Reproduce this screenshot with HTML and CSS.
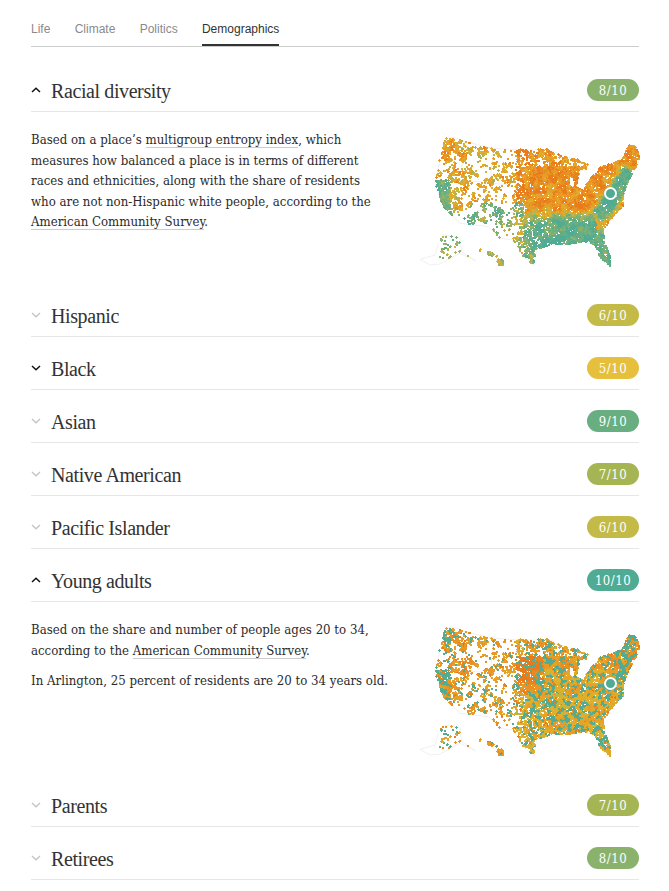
FILE: index.html
```html
<!DOCTYPE html>
<html lang="en">
<head>
<meta charset="utf-8">
<title>Demographics</title>
<link rel="stylesheet" href="styles.css">
</head>
<body>
<main class="page">
  <nav class="tabs">
    <a class="tab">Life</a>
    <a class="tab">Climate</a>
    <a class="tab">Politics</a>
    <a class="tab active">Demographics</a>
  </nav>

  <section class="item">
    <header class="row">
      <svg class="chev dark" viewBox="0 0 10 6"><path d="M1 5 5 1.2 9 5"/></svg>
      <h2>Racial diversity</h2>
      <span class="pill s8">8/10</span>
    </header>
    <div class="body">
      <div class="copy">
        <p>Based on a place’s <a>multigroup entropy index</a>, which<br>measures how balanced a place is in terms of different<br>races and ethnicities, along with the share of residents<br>who are not non-Hispanic white people, according to the<br><a>American Community Survey</a>.</p>
      </div>
      <div class="map"><canvas data-kind="racial" width="220" height="132"></canvas><i class="marker"></i></div>
    </div>
  </section>

  <section class="item">
    <header class="row">
      <svg class="chev" viewBox="0 0 10 6"><path d="M1 1 5 4.8 9 1"/></svg>
      <h2>Hispanic</h2>
      <span class="pill s6">6/10</span>
    </header>
  </section>
  <section class="item">
    <header class="row">
      <svg class="chev dark" viewBox="0 0 10 6"><path d="M1 1 5 4.8 9 1"/></svg>
      <h2>Black</h2>
      <span class="pill s5">5/10</span>
    </header>
  </section>
  <section class="item">
    <header class="row">
      <svg class="chev" viewBox="0 0 10 6"><path d="M1 1 5 4.8 9 1"/></svg>
      <h2>Asian</h2>
      <span class="pill s9">9/10</span>
    </header>
  </section>
  <section class="item">
    <header class="row">
      <svg class="chev" viewBox="0 0 10 6"><path d="M1 1 5 4.8 9 1"/></svg>
      <h2>Native American</h2>
      <span class="pill s7">7/10</span>
    </header>
  </section>
  <section class="item">
    <header class="row">
      <svg class="chev" viewBox="0 0 10 6"><path d="M1 1 5 4.8 9 1"/></svg>
      <h2>Pacific Islander</h2>
      <span class="pill s6">6/10</span>
    </header>
  </section>

  <section class="item">
    <header class="row">
      <svg class="chev dark" viewBox="0 0 10 6"><path d="M1 5 5 1.2 9 5"/></svg>
      <h2>Young adults</h2>
      <span class="pill s10">10/10</span>
    </header>
    <div class="body">
      <div class="copy">
        <p>Based on the share and number of people ages 20 to 34,<br>according to the <a>American Community Survey</a>.</p>
        <p>In Arlington, 25 percent of residents are 20 to 34 years old.</p>
      </div>
      <div class="map"><canvas data-kind="young" width="220" height="132"></canvas><i class="marker"></i></div>
    </div>
  </section>

  <section class="item">
    <header class="row">
      <svg class="chev" viewBox="0 0 10 6"><path d="M1 1 5 4.8 9 1"/></svg>
      <h2>Parents</h2>
      <span class="pill s7">7/10</span>
    </header>
  </section>
  <section class="item">
    <header class="row">
      <svg class="chev" viewBox="0 0 10 6"><path d="M1 1 5 4.8 9 1"/></svg>
      <h2>Retirees</h2>
      <span class="pill s8">8/10</span>
    </header>
  </section>
</main>
<script src="script.js"></script>
</body>
</html>
```
FILE: styles.css
```css
* { box-sizing: border-box; }
html, body { margin: 0; background: #fff; }
body { color: #333; overflow: hidden; }
.page { width: 608px; margin-left: 31px; padding-top: 12px; }

.tabs {
  display: flex;
  gap: 24.3px;
  height: 35px;
  border-bottom: 1px solid #ccc;
  font: 12px/35px "Liberation Sans", Arial, sans-serif;
  color: #8a8a8a;
}
.tab { height: 34px; }
.tab.active { color: #333; border-bottom: 2px solid #333; }

.tabs + .item .row { height: 65px; padding-top: 32px; }

.row {
  display: flex;
  align-items: center;
  height: 53px;
  padding-top: 20px;
  padding-bottom: 10px;
  border-bottom: 1px solid #e6e6e6;
}
.chev {
  width: 10px;
  height: 6px;
  margin-right: 10px;
  flex: none;
  fill: none;
  stroke: #c4c4c4;
  stroke-width: 1.3;
}
.chev.dark { stroke: #111; stroke-width: 1.5; }
h2 {
  flex: 1;
  margin: 0;
  padding-top: 2px;
  font: 400 20px/24px "Liberation Serif", "Times New Roman", serif;
  letter-spacing: -0.4px;
  color: #333;
}
.pill {
  width: 52px;
  height: 22px;
  border-radius: 11px;
  text-align: center;
  color: #fff;
  font: 13px/24px "DejaVu Serif Condensed", "DejaVu Serif", serif;
  letter-spacing: 0.5px;
}
.s5 { background: #e6bf3c; }
.s6 { background: #c4ba48; }
.s7 { background: #a6b553; }
.s8 { background: #8bb26c; }
.s9 { background: #68ae80; }
.s10 { background: #4fab93; }

.body {
  display: flex;
  justify-content: space-between;
  height: 172px;
  padding-top: 18px;
}
.copy {
  font: 13.1px/20.5px "DejaVu Serif Condensed", "DejaVu Serif", serif;
  color: #2b2b2b;
}
.copy p { margin: 0 0 10px; white-space: nowrap; }
.copy a { border-bottom: 1px solid #ccc; }

.map {
  position: relative;
  width: 220px;
  height: 132px;
  margin: 7px -1px 0 0;
}
.map canvas { display: block; width: 220px; height: 132px; }
.marker {
  position: absolute;
  left: 184px;
  top: 50px;
  width: 13px;
  height: 13px;
  border: 2px solid #fff;
  border-radius: 50%;
  background: #4fab93;
  box-shadow: 0 0 0 .5px rgba(80,170,150,.5);
}
```
FILE: script.js
```js
// Draws the two dot maps. Coordinates are in a 3x space matching x 30..690, y 201..597.
(function () {
  var OX = 30, OY = 201, K = 3;
  var lower48 = [[105,205],[135,203],[165,215],[250,235],[330,240],[420,240],[470,262],[500,268],[535,285],[528,300],[510,300],[500,345],[490,350],[478,345],[482,300],[470,290],[500,350],[520,360],[535,335],[550,320],[575,290],[610,280],[640,262],[655,225],[675,228],[690,255],[685,280],[665,315],[650,345],[640,380],[640,410],[610,440],[580,480],[585,520],[603,560],[600,590],[575,570],[555,525],[520,515],[470,525],[420,525],[380,540],[372,588],[340,560],[310,510],[270,505],[235,470],[150,460],[100,410],[75,340],[90,270]];
  var alaska = [[100,495],[150,503],[155,545],[197,572],[150,550],[90,582],[60,585],[30,568],[75,555],[85,520]];
  var hawaii = [[210,535],[222,535],[222,546],[210,546]];
  var hawaii2 = [[230,543],[262,553],[262,562],[230,554]];
  var hawaii3 = [[262,570],[282,570],[282,586],[262,586]];
  var borders = [[[165,215],[150,330]],[[250,235],[240,350]],[[150,330],[300,345]],[[330,240],[330,350]],[[200,420],[340,430]]];

  function inPoly(p, x, y) {
    var c = false;
    for (var i = 0, j = p.length - 1; i < p.length; j = i++) {
      if ((p[i][1] > y) !== (p[j][1] > y) &&
          x < (p[j][0] - p[i][0]) * (y - p[i][1]) / (p[j][1] - p[i][1]) + p[i][0]) c = !c;
    }
    return c;
  }
  function hash(x, y, s) {
    var n = Math.sin(x * 127.1 + y * 311.7 + s * 74.7) * 43758.5453;
    return n - Math.floor(n);
  }
  function noise(x, y, s) {
    var xi = Math.floor(x), yi = Math.floor(y), fx = x - xi, fy = y - yi;
    fx = fx * fx * (3 - 2 * fx); fy = fy * fy * (3 - 2 * fy);
    var a = hash(xi, yi, s), b = hash(xi + 1, yi, s), c = hash(xi, yi + 1, s), d = hash(xi + 1, yi + 1, s);
    return a + (b - a) * fx + (c - a) * fy + (a - b - c + d) * fx * fy;
  }
  function sm(a, b, v) {
    var t = Math.max(0, Math.min(1, (v - a) / (b - a)));
    return t * t * (3 - 2 * t);
  }
  function mix(a, b, t) { return a + (b - a) * t; }

  var stops = [[0, [79,171,147]], [0.3, [136,178,110]], [0.55, [224,178,44]], [0.8, [232,150,36]], [1, [232,122,28]]];
  function color(s) {
    s = Math.max(0, Math.min(1, s));
    for (var i = 1; i < stops.length; i++) {
      if (s <= stops[i][0]) {
        var t = (s - stops[i - 1][0]) / (stops[i][0] - stops[i - 1][0]);
        var A = stops[i - 1][1], B = stops[i][1];
        return 'rgb(' + Math.round(mix(A[0], B[0], t)) + ',' + Math.round(mix(A[1], B[1], t)) + ',' + Math.round(mix(A[2], B[2], t)) + ')';
      }
    }
    return 'rgb(232,122,28)';
  }
  function distSeg(x, y, a, b, c, d) {
    var dx = c - a, dy = d - b, t = ((x - a) * dx + (y - b) * dy) / (dx * dx + dy * dy);
    t = Math.max(0, Math.min(1, t));
    return Math.hypot(x - a - t * dx, y - b - t * dy);
  }
  function density(x, y) {
    var n = noise(x / 15, y / 15, 1) * 0.7 + noise(x / 6, y / 6, 2) * 0.3;
    var westP = 0.025 + 0.42 * sm(0.48, 0.62, n);
    var eastP = 0.95;
    if (x > 330 && x < 560 && y < 290) eastP = 0.08 + 0.75 * sm(0.4, 0.55, n);
    if (y > 440 && x < 420) eastP = 0.55;
    var p = mix(westP, eastP, sm(300, 375, x));
    if (x < 125 && y > 330) p = Math.max(p, 0.7);
    if (y < 275 && x < 170) p = Math.max(p, 0.1 + 0.6 * sm(0.4, 0.55, n));
    return p;
  }
  function racial(x, y, sd) {
    var s = 0.84;
    if (x < 320) s = 0.66;
    var south = sm(405, 465, y + (x > 560 ? -50 : 0));
    s = mix(s, 0.07, south);
    s = mix(s, 0.06, 1 - sm(10, 38, distSeg(x, y, 575, 430, 650, 315)));
    s = mix(s, 0.08, 1 - sm(105, 140, x + (y < 330 ? 70 : 0)));
    if (x > 180 && x < 340 && y > 400) s = 0.22;
    if (y > 490) s = 0.07 + (x < 340 ? 0.25 : 0);
    if (x > 290 && x < 370 && y > 440) s += 0.15;
    return s + (noise(x / 14, y / 14, 3) - 0.5) * 0.5 + (sd - 0.5) * 0.32;
  }
  function young(x, y, sd) {
    var b = noise(x / 7, y / 7, 4);
    var s = 0.62 + (noise(x / 20, y / 20, 5) - 0.5) * 0.32;
    if (x < 320) s += 0.16;
    if (y < 330 && x > 340) s += 0.12;
    if (x > 320 && y > 290 && y < 400 && x < 400) s += 0.28;
    var tealTh = x > 350 ? 0.6 : 0.72;
    if (x < 125 || x > 610) tealTh = 0.48;
    if (b > tealTh) s = 0.02;
    if (sd > 0.95) s = 0.97;
    return s;
  }

  // deterministic generator, so each reload gives the same picture
  function rng(seed) {
    var v = seed;
    return function () { v = (v * 1664525 + 1013904223) % 4294967296; return v / 4294967296; };
  }

  document.querySelectorAll('canvas[data-kind]').forEach(function (cv) {
    var ctx = cv.getContext('2d');
    var f = cv.dataset.kind === 'racial' ? racial : young;
    var rnd = rng(20210);
    ctx.strokeStyle = '#f0f0f0';
    ctx.lineWidth = 1;
    function tr(p) { return [(p[0] - OX) / K, (p[1] - OY) / K]; }
    function outline(poly) {
      ctx.beginPath();
      poly.forEach(function (p, i) { var q = tr(p); if (i) ctx.lineTo(q[0], q[1]); else ctx.moveTo(q[0], q[1]); });
      ctx.stroke();
    }
    outline(lower48); outline(alaska);
    borders.forEach(outline);

    for (var i = 0; i < 24000; i++) {
      var px = Math.floor(rnd() * 220), py = Math.floor(rnd() * 132);
      var x = px * K + OX + 3, y = py * K + OY + 3, p = 0;
      if (inPoly(lower48, x, y)) p = density(x, y);
      else if (inPoly(alaska, x, y)) p = (x > 85 && y > 490) ? (noise(x / 14, y / 14, 7) > 0.55 ? 0.2 : 0.03) : 0;
      else if (inPoly(hawaii, x, y) || inPoly(hawaii2, x, y) || inPoly(hawaii3, x, y)) p = 0.7;
      var r = rnd(), sd = rnd(), sh = rnd();
      if (r < p) {
        ctx.fillStyle = color(f(x, y, sd));
        if (sh < 0.2) {
          ctx.fillRect(px - 1, py, 3, 1);
          ctx.fillRect(px, py - 1, 1, 3);
        } else {
          ctx.fillRect(px, py, 2, 2);
        }
      }
    }
  });
})();
```
